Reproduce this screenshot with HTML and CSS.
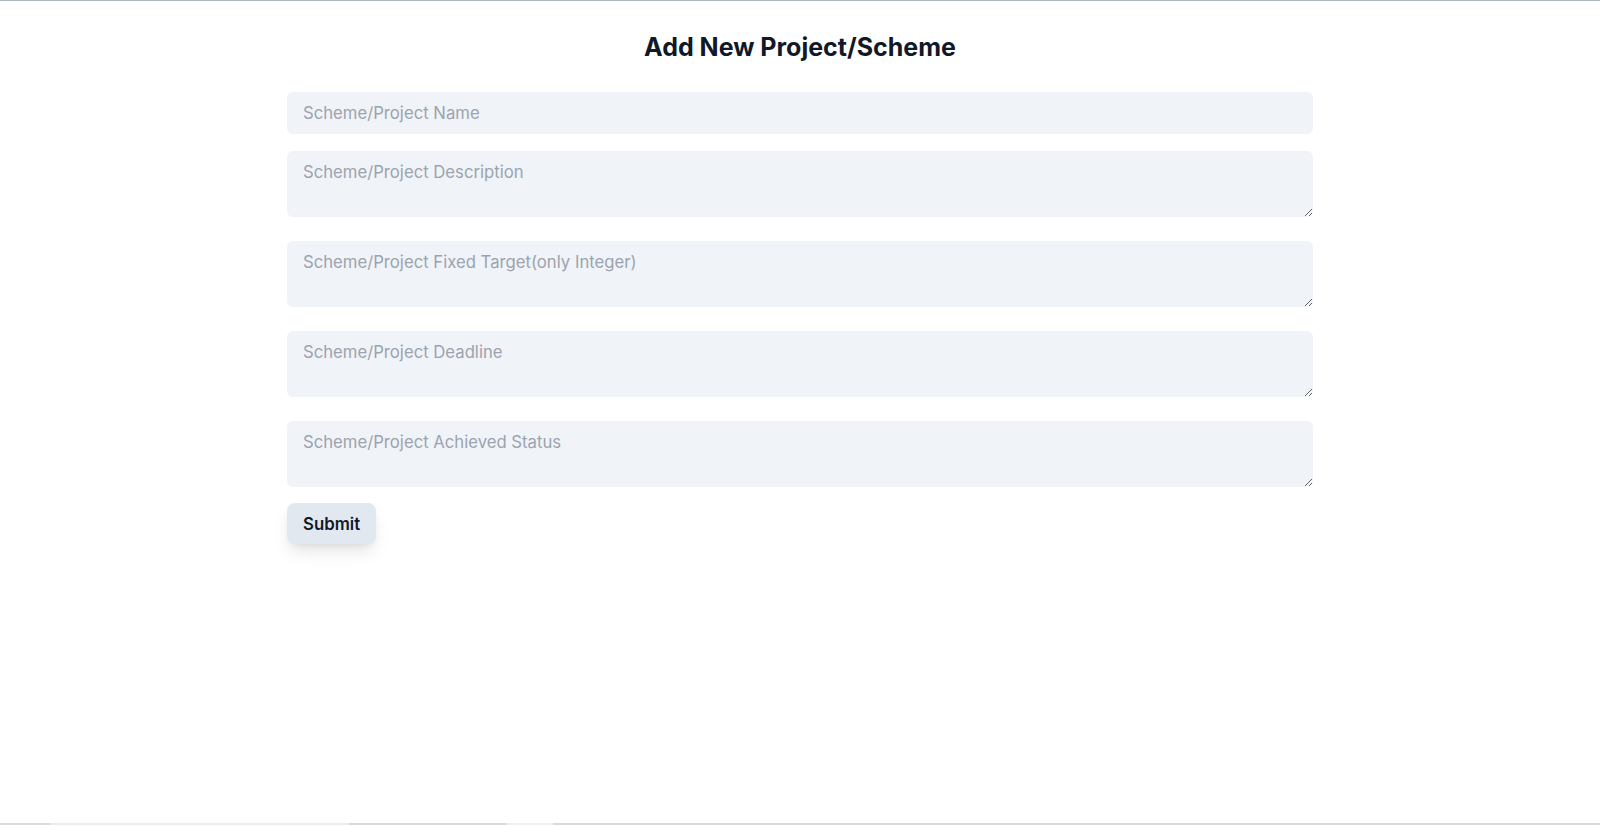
FILE: index.html
```html
<!DOCTYPE html>
<html lang="en">
<head>
<meta charset="utf-8">
<title>Add New Project/Scheme</title>
<link rel="stylesheet" href="styles.css">
</head>
<body>
<div class="topline"></div>
<main class="page">
  <h1 class="title">Add New Project/Scheme</h1>
  <form class="form">
    <input class="field field-input" type="text" placeholder="Scheme/Project Name">
    <textarea class="field field-area" rows="2" placeholder="Scheme/Project Description"></textarea>
    <textarea class="field field-area" rows="2" placeholder="Scheme/Project Fixed Target(only Integer)"></textarea>
    <textarea class="field field-area" rows="2" placeholder="Scheme/Project Deadline"></textarea>
    <textarea class="field field-area field-last" rows="2" placeholder="Scheme/Project Achieved Status"></textarea>
    <div class="actions"><button type="button" class="submit">Submit</button></div>
  </form>
</main>
<div class="bottombar">
  <span class="seg s1"></span><span class="seg s2"></span><span class="seg s3"></span><span class="seg s4"></span><span class="seg s5"></span>
</div>
</body>
</html>
```
FILE: styles.css
```css
* { box-sizing: border-box; }
html, body { height: 100%; }
body {
  margin: 0;
  background: #ffffff;
  font-family: Inter, "Noto Sans", Arial, sans-serif;
  color: #111827;
  overflow: hidden;
}
.topline { height: 1px; background: #a9b9b9; }
.page {
  width: 1026px;
  margin: 0 auto;
  padding-top: 30px;
}
.title {
  margin: 0 0 29px;
  text-align: center;
  font-size: 25px;
  line-height: 32px;
  font-weight: 700;
  color: #111827;
}
.form { display: flex; flex-direction: column; }
.field {
  display: block;
  width: 100%;
  background: #f0f3f8;
  border: 0;
  border-radius: 6px;
  padding: 9px 16px;
  font-family: Inter, "Noto Sans", Arial, sans-serif;
  font-size: 16.7px;
  line-height: 24px;
  color: #111827;
  outline: none;
}
.field::placeholder { color: #9ca3af; }
.field-input { height: 42px; margin-bottom: 17px; }
.field-area { height: 66px; margin-bottom: 24px; resize: vertical; }
.field-last { margin-bottom: 16px; }
.actions { display: flex; }
.submit {
  height: 41px;
  padding: 0 16px;
  border: none;
  border-radius: 8px;
  background: #e2e8f0;
  font-family: Inter, "Noto Sans", Arial, sans-serif;
  font-size: 16.8px;
  font-weight: 600;
  color: #111827;
  box-shadow: 0 10px 18px -3px rgba(0,0,0,0.1), 0 4px 8px -4px rgba(0,0,0,0.1);
  cursor: pointer;
}
.bottombar {
  position: fixed;
  left: 0; right: 0; bottom: 1px;
  height: 2px;
  display: flex;
}
.seg { height: 2px; }
.s1 { width: 50px; background: #dcdcdc; }
.s2 { width: 299px; background: #ececec; }
.s3 { width: 158px; background: #dadada; }
.s4 { width: 46px; background: #f1f1f1; }
.s5 { flex: 1; background: #dadada; }
```
